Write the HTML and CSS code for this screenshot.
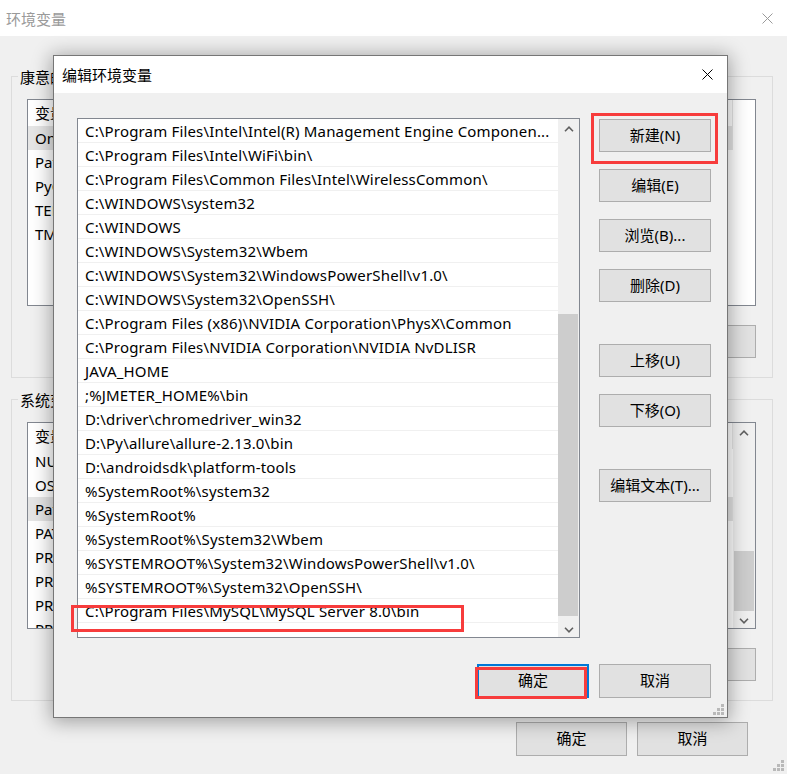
FILE: index.html
```html
<!DOCTYPE html>
<html lang="zh-CN">
<head>
<meta charset="utf-8">
<title>环境变量</title>
<link rel="stylesheet" href="styles.css">
</head>
<body>
<div class="win">
  <div class="titlebar">
    <span class="title">环境变量</span>
    <svg class="xbtn" width="11" height="11" viewBox="0 0 11 11"><path d="M0.5 0.5 L10.5 10.5 M10.5 0.5 L0.5 10.5" stroke="#9a9a9a" stroke-width="1" fill="none"/></svg>
  </div>
  <div class="win-body">
    <div class="group">
      <div class="legend">康意的用户变量(U)</div>
      <div class="lv">
        <div class="lv-rows">
          <div class="lv-head"><span class="c1">变量</span><span class="c2">值</span></div>
          <div class="lv-row sel">OneDrive</div>
          <div class="lv-row">Path</div>
          <div class="lv-row">PyCharm Community Edition</div>
          <div class="lv-row">TEMP</div>
          <div class="lv-row">TMP</div>
        </div>
      </div>
      <div class="btnrow">
        <div class="btn bg-btn">新建(N)...</div>
        <div class="btn bg-btn">编辑(E)...</div>
        <div class="btn bg-btn">删除(D)</div>
      </div>
    </div>
    <div class="group">
      <div class="legend">系统变量(S)</div>
      <div class="lv">
        <div class="lv-rows">
          <div class="lv-head"><span class="c1">变量</span><span class="c2">值</span></div>
          <div class="lv-row">NUMBER_OF_PROCESSORS</div>
          <div class="lv-row">OS</div>
          <div class="lv-row sel">Path</div>
          <div class="lv-row">PATHEXT</div>
          <div class="lv-row">PROCESSOR_ARCHITECTURE</div>
          <div class="lv-row">PROCESSOR_IDENTIFIER</div>
          <div class="lv-row">PROCESSOR_LEVEL</div>
          <div class="lv-row">PROCESSOR_REVISION</div>
        </div>
        <div class="sb sb-small">
          <div class="sb-btn"><svg width="10" height="6" viewBox="0 0 10 6"><polyline points="1,5.2 5,1.2 9,5.2" fill="none" stroke="#606060" stroke-width="1.6"/></svg></div>
          <div class="sb-track"><div class="sb-thumb-small"></div></div>
          <div class="sb-btn"><svg width="10" height="6" viewBox="0 0 10 6"><polyline points="1,0.8 5,4.8 9,0.8" fill="none" stroke="#606060" stroke-width="1.6"/></svg></div>
        </div>
      </div>
      <div class="btnrow">
        <div class="btn bg-btn">新建(W)...</div>
        <div class="btn bg-btn">编辑(I)...</div>
        <div class="btn bg-btn">删除(L)</div>
      </div>
    </div>
    <div class="win-foot">
      <div class="btn foot-btn">确定</div>
      <div class="btn foot-btn">取消</div>
    </div>
  </div>
  <svg class="grip grip-win" width="12" height="12" viewBox="0 0 12 12"><g fill="#b9b9b9"><rect x="8" y="0" width="3" height="3"/><rect x="4" y="4" width="3" height="3"/><rect x="8" y="4" width="3" height="3"/><rect x="0" y="8" width="3" height="3"/><rect x="4" y="8" width="3" height="3"/><rect x="8" y="8" width="3" height="3"/></g></svg>
</div>

<div class="dlg">
  <div class="dlg-title">
    <span>编辑环境变量</span>
    <svg class="xbtn" width="11" height="11" viewBox="0 0 11 11"><path d="M0.5 0.5 L10.5 10.5 M10.5 0.5 L0.5 10.5" stroke="#000" stroke-width="1" fill="none"/></svg>
  </div>
  <div class="dlg-body">
    <div class="dlg-main">
      <div class="plist">
        <div class="plist-rows">
          <div class="prow">C:\Program Files\Intel\Intel(R) Management Engine Componen...</div>
          <div class="prow">C:\Program Files\Intel\WiFi\bin\</div>
          <div class="prow">C:\Program Files\Common Files\Intel\WirelessCommon\</div>
          <div class="prow">C:\WINDOWS\system32</div>
          <div class="prow">C:\WINDOWS</div>
          <div class="prow">C:\WINDOWS\System32\Wbem</div>
          <div class="prow">C:\WINDOWS\System32\WindowsPowerShell\v1.0\</div>
          <div class="prow">C:\WINDOWS\System32\OpenSSH\</div>
          <div class="prow">C:\Program Files (x86)\NVIDIA Corporation\PhysX\Common</div>
          <div class="prow">C:\Program Files\NVIDIA Corporation\NVIDIA NvDLISR</div>
          <div class="prow">JAVA_HOME</div>
          <div class="prow">;%JMETER_HOME%\bin</div>
          <div class="prow">D:\driver\chromedriver_win32</div>
          <div class="prow">D:\Py\allure\allure-2.13.0\bin</div>
          <div class="prow">D:\androidsdk\platform-tools</div>
          <div class="prow">%SystemRoot%\system32</div>
          <div class="prow">%SystemRoot%</div>
          <div class="prow">%SystemRoot%\System32\Wbem</div>
          <div class="prow">%SYSTEMROOT%\System32\WindowsPowerShell\v1.0\</div>
          <div class="prow">%SYSTEMROOT%\System32\OpenSSH\</div>
          <div class="prow">C:\Program Files\MySQL\MySQL Server 8.0\bin</div>
        </div>
        <div class="sb">
          <div class="sb-btn"><svg width="10" height="6" viewBox="0 0 10 6"><polyline points="1,5.2 5,1.2 9,5.2" fill="none" stroke="#606060" stroke-width="1.6"/></svg></div>
          <div class="sb-track"><div class="sb-thumb"></div></div>
          <div class="sb-btn"><svg width="10" height="6" viewBox="0 0 10 6"><polyline points="1,0.8 5,4.8 9,0.8" fill="none" stroke="#606060" stroke-width="1.6"/></svg></div>
        </div>
      </div>
      <div class="btncol">
        <div class="btn">新建(N)</div>
        <div class="btn">编辑(E)</div>
        <div class="btn">浏览(B)...</div>
        <div class="btn">删除(D)</div>
        <div class="spacer"></div>
        <div class="btn">上移(U)</div>
        <div class="btn">下移(O)</div>
        <div class="spacer"></div>
        <div class="btn">编辑文本(T)...</div>
      </div>
    </div>
    <div class="dlg-foot">
      <div class="btn btn-default">确定</div>
      <div class="btn">取消</div>
    </div>
  </div>
  <svg class="grip grip-dlg" width="12" height="12" viewBox="0 0 12 12"><g fill="#b9b9b9"><rect x="8" y="0" width="3" height="3"/><rect x="4" y="4" width="3" height="3"/><rect x="8" y="4" width="3" height="3"/><rect x="0" y="8" width="3" height="3"/><rect x="4" y="8" width="3" height="3"/><rect x="8" y="8" width="3" height="3"/></g></svg>
</div>

<div class="mark mark-new"></div>
<div class="mark mark-mysql"></div>
<div class="mark mark-ok"></div>
</body>
</html>
```

FILE: styles.css
```css
* { box-sizing: border-box; }
html, body { margin: 0; padding: 0; }
body {
  width: 787px;
  height: 774px;
  overflow: hidden;
  position: relative;
  background: #f0f0f0;
  font-family: "Noto Sans", "Noto Sans CJK SC", sans-serif;
  font-size: 15px;
  color: #000;
}

/* background window */
.win { height: 774px; }
.titlebar {
  height: 36px;
  background: #fff;
  display: flex;
  align-items: center;
  justify-content: space-between;
  padding: 0 14px 0 6px;
}
.title { color: #9a9a9a; }
.xbtn { display: block; }
.win-body { padding: 40px 14px 0 11px; }
.group {
  border: 1px solid #dcdcdc;
  padding: 0 16px 19px 15px;
}
.group + .group { margin-top: 21px; }
.legend {
  width: fit-content;
  margin: -10px 0 0 -9px;
  padding: 0 2px;
  line-height: 20px;
  background: #f0f0f0;
  white-space: nowrap;
}
.lv {
  margin-top: 12px;
  height: 207px;
  border: 1px solid #828790;
  background: #fff;
  display: flex;
  overflow: hidden;
}
.lv-rows { width: 705px; flex: none; }
.lv-head {
  height: 26px;
  line-height: 26px;
  display: flex;
  border-right: 1px solid #e5e5e5;
}
.lv-head .c1 { width: 200px; padding-left: 7px; border-right: 1px solid #e5e5e5; }
.lv-head .c2 { padding-left: 7px; }
.lv-row {
  height: 24px;
  line-height: 24px;
  padding-left: 7px;
  white-space: nowrap;
}
.lv-row.sel { background: #e5e5e5; }
.sb-small { flex: 1; }
.sb-thumb-small {
  height: 60px;
  margin-top: 56px;
  margin-left: 1px;
  margin-right: 1px;
  background: #cdcdcd;
}
.btnrow {
  display: flex;
  justify-content: flex-end;
  gap: 11px;
  margin-top: 19px;
}
.btn {
  height: 33px;
  width: 112px;
  background: #e1e1e1;
  border: 1px solid #adadad;
  display: flex;
  align-items: center;
  justify-content: center;
  white-space: nowrap;
  padding-bottom: 3px;
}
.bg-btn { width: 111px; }
.win-foot {
  display: flex;
  justify-content: flex-end;
  gap: 10px;
  margin-top: 21px;
  padding-right: 25px;
}
.foot-btn { width: 111px; height: 34px; }

.grip { position: absolute; display: block; }
.grip-win { right: 2px; bottom: 2px; }
.grip-dlg { right: 2px; bottom: 1px; }

/* dialog */
.dlg {
  position: absolute;
  left: 53px;
  top: 55px;
  width: 675px;
  height: 663px;
  border: 1px solid #767676;
  background: #f0f0f0;
  box-shadow: 0 2px 18px 2px rgba(0, 0, 0, 0.33);
  display: flex;
  flex-direction: column;
}
.dlg-title {
  height: 37px;
  flex: none;
  background: #fff;
  display: flex;
  align-items: center;
  justify-content: space-between;
  padding: 0 14px 0 8px;
}
.dlg-body {
  flex: 1;
  padding: 25px 16px 20px 23px;
}
.dlg-main { display: flex; gap: 19px; }
.plist {
  width: 503px;
  height: 520px;
  border: 1px solid #828790;
  background: #fff;
  display: flex;
  overflow: hidden;
}
.plist-rows { width: 480px; flex: none; }
.prow {
  height: 24px;
  line-height: 25px;
  border-bottom: 1px solid #f0f0f0;
  padding-left: 7px;
  white-space: nowrap;
  overflow: hidden;
  letter-spacing: 0.17px;
}
.sb {
  flex: 1;
  background: #f0f0f0;
  display: flex;
  flex-direction: column;
}
.sb-btn {
  height: 17px;
  flex: none;
  display: flex;
  align-items: center;
  justify-content: center;
  padding-top: 3px;
}
.sb-track {
  flex: 1;
  display: flex;
  flex-direction: column;
  justify-content: flex-end;
}
.sb-thumb {
  height: 302px;
  margin-bottom: 4px;
  margin-right: 1px;
  background: #cdcdcd;
}
.btncol {
  display: flex;
  flex-direction: column;
  gap: 17px;
  padding-top: 1px;
}
.spacer { height: 8px; }
.dlg-foot {
  display: flex;
  justify-content: flex-end;
  gap: 10px;
  margin-top: 26px;
}
.dlg-foot .btn { height: 34px; }
.btn-default { border: 2px solid #0078d7; }

/* red annotation boxes */
.mark {
  position: absolute;
  border: 3px solid #f73c3c;
}
.mark-new { left: 591px; top: 113px; width: 127px; height: 51px; }
.mark-mysql { left: 71px; top: 605px; width: 393px; height: 27px; }
.mark-ok { left: 475px; top: 667px; width: 112px; height: 32px; }
```
